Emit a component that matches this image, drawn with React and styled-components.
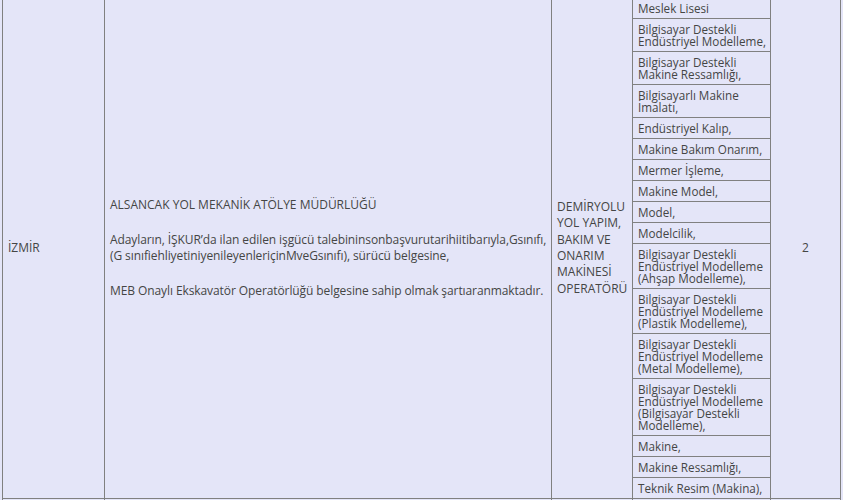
import styled, { createGlobalStyle } from 'styled-components'

const GlobalStyle = createGlobalStyle`
  html, body {
    margin: 0;
    padding: 0;
    background: #e4e5f8;
  }
  body {
    font-family: "Open Sans", "Liberation Sans", sans-serif;
    font-size: 12px;
    color: #454545;
  }
`

const Page = styled.div`
  padding-left: 2px;
  margin-top: -3px;
`

const Table = styled.table`
  width: 838px;
  table-layout: fixed;
  border-collapse: collapse;
`

const Cell = styled.td`
  border: 1px solid #808080;
  padding: 0 5px;
  vertical-align: middle;
  text-align: ${(p) => (p.$center ? 'center' : 'left')};
  line-height: 16.4px;
`

const ListCell = styled.td`
  border: 1px solid #808080;
  padding: 0;
  vertical-align: top;
  overflow: hidden;
`

const Notes = styled.div`
  display: flex;
  flex-direction: column;
  gap: 19px;
  line-height: 16px;
`

const Note = styled.div`
  white-space: nowrap;
  letter-spacing: ${(p) => (p.$tight ? '-0.09px' : '0')};
`

const InnerTable = styled.table`
  width: 100%;
  table-layout: fixed;
  border-collapse: collapse;
`

const InnerCell = styled.td`
  padding: 4px 5px;
  font-size: 11.7px;
  line-height: 12px;
  white-space: nowrap;
  tr + tr > & {
    border-top: 1px solid #808080;
  }
`

const schools = [
  ['Meslek Lisesi'],
  ['Bilgisayar Destekli', 'Endüstriyel Modelleme,'],
  ['Bilgisayar Destekli', 'Makine Ressamlığı,'],
  ['Bilgisayarlı Makine', 'İmalatı,'],
  ['Endüstriyel Kalıp,'],
  ['Makine Bakım Onarım,'],
  ['Mermer İşleme,'],
  ['Makine Model,'],
  ['Model,'],
  ['Modelcilik,'],
  ['Bilgisayar Destekli', 'Endüstriyel Modelleme', '(Ahşap Modelleme),'],
  ['Bilgisayar Destekli', 'Endüstriyel Modelleme', '(Plastik Modelleme),'],
  ['Bilgisayar Destekli', 'Endüstriyel Modelleme', '(Metal Modelleme),'],
  ['Bilgisayar Destekli', 'Endüstriyel Modelleme', '(Bilgisayar Destekli', 'Modelleme),'],
  ['Makine,'],
  ['Makine Ressamlığı,'],
  ['Teknik Resim (Makina),'],
]

const Lines = ({ lines }) =>
  lines.map((l, i) => (
    <span key={i}>
      {i > 0 && <br />}
      {l}
    </span>
  ))

const App = () => {
  return (
    <Page>
      <GlobalStyle />
      <Table>
        <colgroup>
          <col style={{ width: 102 }} />
          <col style={{ width: 447 }} />
          <col style={{ width: 81 }} />
          <col style={{ width: 138 }} />
          <col style={{ width: 70 }} />
        </colgroup>
        <tbody>
          <tr>
            <Cell>İZMİR</Cell>
            <Cell>
              <Notes>
                <Note>ALSANCAK YOL MEKANİK ATÖLYE MÜDÜRLÜĞÜ</Note>
                <Note $tight>
                  Adayların, İŞKUR’da ilan edilen işgücü talebininsonbaşvurutarihiitibarıyla,Gsınıfı,
                  <br />
                  (G sınıfiehliyetiniyenileyenleriçinMveGsınıfı), sürücü belgesine,
                </Note>
                <Note $tight>MEB Onaylı Ekskavatör Operatörlüğü belgesine sahip olmak şartıaranmaktadır.</Note>
              </Notes>
            </Cell>
            <Cell>
              DEMİRYOLU YOL YAPIM, BAKIM VE ONARIM MAKİNESİ OPERATÖRÜ
            </Cell>
            <ListCell>
              <InnerTable>
                <tbody>
                  {schools.map((s, i) => (
                    <tr key={i}>
                      <InnerCell>
                        <Lines lines={s} />
                      </InnerCell>
                    </tr>
                  ))}
                </tbody>
              </InnerTable>
            </ListCell>
            <Cell $center>2</Cell>
          </tr>
          <tr>
            <Cell>İZMİR</Cell>
            <Cell>ALSANCAK YOL MEKANİK ATÖLYE MÜDÜRLÜĞÜ</Cell>
            <Cell>KAYNAKÇI</Cell>
            <ListCell>
              <InnerTable>
                <tbody>
                  <tr>
                    <InnerCell>Metal Teknolojisi,</InnerCell>
                  </tr>
                  <tr>
                    <InnerCell>Kaynakçılık,</InnerCell>
                  </tr>
                </tbody>
              </InnerTable>
            </ListCell>
            <Cell $center>1</Cell>
          </tr>
        </tbody>
      </Table>
    </Page>
  )
}

export default App
